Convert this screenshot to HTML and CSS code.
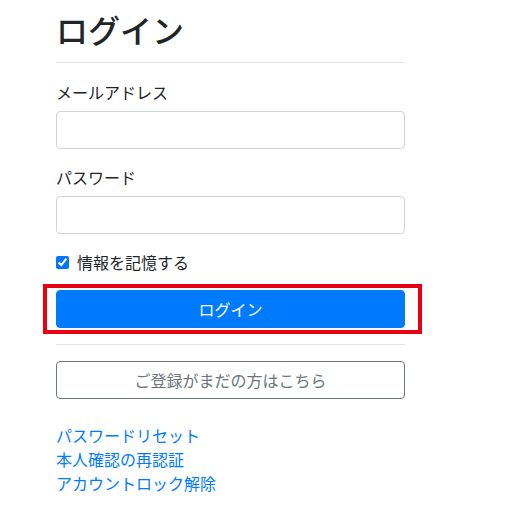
FILE: index.html
```html
<!DOCTYPE html>
<html lang="ja">
<head>
<meta charset="utf-8">
<title>ログイン</title>
<link rel="stylesheet" href="styles.css">
</head>
<body>
<main class="page">
  <h2 class="title">ログイン</h2>
  <hr class="rule">
  <form class="form">
    <div class="group">
      <label class="label" for="email">メールアドレス</label>
      <input class="input" id="email" type="email">
    </div>
    <div class="group">
      <label class="label" for="pw">パスワード</label>
      <input class="input" id="pw" type="password">
    </div>
    <div class="check">
      <input class="check-input" id="remember" type="checkbox" checked>
      <label class="check-label" for="remember">情報を記憶する</label>
    </div>
    <div class="submit-wrap">
      <button class="btn btn-primary" type="button">ログイン</button>
      <span class="highlight"></span>
    </div>
  </form>
  <hr class="rule rule-2">
  <button class="btn btn-outline" type="button">ご登録がまだの方はこちら</button>
  <nav class="links">
    <a href="#">パスワードリセット</a>
    <a href="#">本人確認の再認証</a>
    <a href="#">アカウントロック解除</a>
  </nav>
</main>
</body>
</html>
```
FILE: styles.css
```css
html, body {
  margin: 0;
  padding: 0;
  background: #fff;
}
body {
  font-family: "Noto Sans CJK JP", "Noto Sans", "Liberation Sans", sans-serif;
  font-size: 16px;
  line-height: 24px;
  color: #212529;
}
.page {
  width: 349px;
  margin-left: 56px;
  padding-top: 10px;
  display: flex;
  flex-direction: column;
}
.title {
  margin: 0;
  font-size: 32px;
  line-height: 38px;
  font-weight: 500;
  color: #212529;
}
.rule {
  margin: 14px 0 0;
  border: 0;
  border-top: 1px solid rgba(0,0,0,.1);
  height: 0;
}
.form {
  margin-top: 17px;
  display: flex;
  flex-direction: column;
}
.group {
  display: flex;
  flex-direction: column;
  margin-bottom: 16px;
}
.label {
  margin-bottom: 7px;
}
.input {
  box-sizing: border-box;
  height: 38px;
  width: 100%;
  border: 1px solid #ced4da;
  border-radius: 4px;
  background: #fff;
  margin: 0;
  padding: 6px 12px;
  font: inherit;
}
.check {
  display: flex;
  align-items: center;
  gap: 8px;
  height: 24px;
}
.check-input {
  margin: 0;
  width: 13px;
  height: 13px;
}
.submit-wrap {
  position: relative;
  margin-top: 16px;
}
.btn {
  box-sizing: border-box;
  display: block;
  width: 100%;
  height: 38px;
  border-radius: 4px;
  font-family: inherit;
  font-size: 16px;
  line-height: 24px;
  padding: 6px 12px;
  margin: 0;
  cursor: pointer;
}
.btn-primary {
  background: #007bff;
  border: 1px solid #007bff;
  color: #fff;
}
.highlight {
  position: absolute;
  left: -13px;
  top: -6px;
  width: 379px;
  height: 50px;
  box-sizing: border-box;
  border: 4px solid #e60012;
  pointer-events: none;
}
.rule-2 {
  margin-top: 16px;
}
.btn-outline {
  margin-top: 16px;
  background: #fff;
  border: 1px solid #6c757d;
  color: #6c757d;
}
.links {
  margin-top: 24px;
  display: flex;
  flex-direction: column;
  align-items: flex-start;
}
.links a {
  color: #007bff;
  text-decoration: none;
  line-height: 24px;
}
```
